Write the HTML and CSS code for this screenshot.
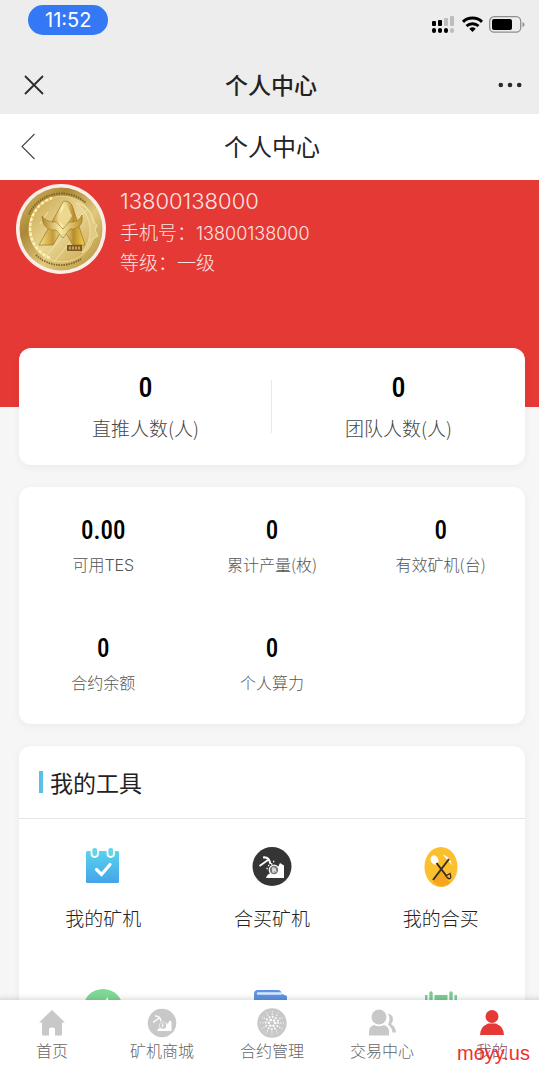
FILE: index.html
```html
<!DOCTYPE html>
<html lang="zh-CN">
<head>
<meta charset="utf-8">
<meta name="viewport" content="width=device-width, initial-scale=1">
<title>个人中心</title>
<link rel="stylesheet" href="styles.css">
</head>
<body>
<div class="app">
  <div class="chrome">
    <div class="status">
      <span class="clock">11:52</span>
      <svg class="status-icons" width="94" height="20" viewBox="0 0 94 20" aria-hidden="true">
        <g fill="#000"><rect x="0" y="6" width="4" height="5" rx="1"/><rect x="6" y="5" width="4" height="6" rx="1"/><rect x="0" y="13" width="4" height="5" rx="2"/><rect x="6" y="13" width="4" height="5" rx="2"/><rect x="12" y="13" width="4" height="5" rx="2"/></g>
        <g fill="#bdbdbd"><rect x="12" y="3" width="4" height="8" rx="1"/><rect x="18" y="1" width="4" height="10" rx="1"/><rect x="18" y="13" width="4" height="5" rx="2"/></g>
        <g fill="none" stroke="#000" stroke-width="3"><path d="M31 6.800a14 14 0 0 1 19 0"/><path d="M34.500 11a9 9 0 0 1 12 0"/></g>
        <path d="M37.300 13.700a5 5 0 0 1 6.400 0L40.500 17z"/>
        <rect x="57.700" y="1.700" width="31" height="15.500" rx="4.500" fill="none" stroke="#8f8f8f" stroke-width="1.300"/>
        <rect x="60" y="4" width="20" height="11" rx="2"/>
        <path d="M90.500 7v5q2-.5 2-2.500t-2-2.500" fill="#8f8f8f"/>
      </svg>
    </div>
    <div class="titlebar">
      <button class="icon-button" aria-label="关闭"><svg width="20" height="20" viewBox="0 0 20 20"><path d="M1 1 19 19M19 1 1 19" stroke="#2b2b2b" stroke-width="1.800" fill="none"/></svg></button>
      <h1 class="app-title">个人中心</h1>
      <button class="icon-button end" aria-label="更多"><svg width="24" height="6" viewBox="0 0 24 6" fill="#2b2b2b"><circle cx="2.800" cy="3" r="2.300"/><circle cx="12" cy="3" r="2.300"/><circle cx="21.200" cy="3" r="2.300"/></svg></button>
    </div>
  </div>
  <header class="page-head">
    <button class="icon-button" aria-label="返回"><svg width="16" height="28" viewBox="0 0 16 28"><path d="M14.500 1 2 13.500 14.500 26" stroke="#444" stroke-width="1.100" fill="none"/></svg></button>
    <h2 class="page-title">个人中心</h2>
  </header>

  <main class="content">
    <section class="profile">
      <svg class="avatar" viewBox="0 0 90 90" aria-hidden="true">
        <defs>
          <linearGradient id="rim" x1="0" y1="0" x2="1" y2="1"><stop offset="0" stop-color="#d9bd6c"/><stop offset=".3" stop-color="#ab8838"/><stop offset=".6" stop-color="#e0c87c"/><stop offset="1" stop-color="#b08c38"/></linearGradient>
          <linearGradient id="face" x1="0" y1="0" x2="1" y2="1"><stop offset="0" stop-color="#c8a348"/><stop offset=".5" stop-color="#e9d796"/><stop offset="1" stop-color="#c9a44c"/></linearGradient>
          <linearGradient id="mark" x1="0" y1="0" x2="1" y2="0"><stop offset="0" stop-color="#f7e58e"/><stop offset=".3" stop-color="#c59a35"/><stop offset=".5" stop-color="#fff3b4"/><stop offset=".75" stop-color="#b98c2c"/><stop offset="1" stop-color="#f3d54f"/></linearGradient>
          <linearGradient id="horn" x1="0" y1="0" x2="1" y2="0"><stop offset="0" stop-color="#b08428"/><stop offset=".45" stop-color="#f7e9a6"/><stop offset="1" stop-color="#c0922d"/></linearGradient>
        </defs>
        <circle cx="45" cy="45" r="45" fill="#fbeee8"/>
        <circle cx="45" cy="45" r="41.500" fill="url(#rim)"/>
        <path d="M13 30A36 36 0 0 1 70 19M20 71a36 36 0 0 0 45 4" fill="none" stroke="#7f6222" stroke-width="1.800" stroke-dasharray="1.500 1"/>
        <circle cx="46" cy="45" r="33" fill="url(#face)" stroke="#f0e0a0" stroke-width=".8"/>
        <path d="M34 74A32 32 0 0 1 36 14" fill="none" stroke="#fff2b0" stroke-width="2.400" stroke-dasharray="3.500 1.500"/>
        <path d="M60 19q16 4 17 19l4 3-2 5 3 6-7 4q-2 9-9 13 9-12 8-25-1-15-14-25" fill="#e2cb84" stroke="#f5e8b4" stroke-width=".7"/>
        <path d="M27 76 45 54M38 78 54 58M62 34l10-9M24 40l8-12" stroke="#f6e9b2" stroke-width=".8"/>
        <path d="M49 17q-2 0-3 3L23 61h14l10-17 10 17h12L57 24q-1-4-4-6z" fill="url(#mark)" stroke="#97742a" stroke-width=".7"/>
        <path d="M26 32q0 11 9 14h5l7 8 7-9h4q10-3 8-14-3 7-10 7h-3l-6 7-7-7h-4q-7-1-10-6z" fill="url(#horn)" stroke="#97742a" stroke-width=".6"/>
        <path d="m50 19-8 16 6 8 8-11z" fill="#ecd98f"/>
        <rect x="51" y="61" width="15" height="6" fill="#7e5924"/>
        <path d="M53 64h11" stroke="#c4a05d" stroke-width="3" stroke-dasharray="2 1"/>
      </svg>
      <div class="profile-text">
        <p class="profile-name">13800138000</p>
        <p class="profile-row">手机号：<span class="digits">13800138000</span></p>
        <p class="profile-row">等级：一级</p>
      </div>
    </section>

    <div class="cards">
      <dl class="card team">
        <div class="team-item"><dt>直推人数(人)</dt><dd>0</dd></div>
        <div class="team-item"><dt>团队人数(人)</dt><dd>0</dd></div>
      </dl>

      <dl class="card stats">
        <div class="stat"><dt>可用<span class="latin">TES</span></dt><dd>0.00</dd></div>
        <div class="stat"><dt>累计产量(枚)</dt><dd>0</dd></div>
        <div class="stat"><dt>有效矿机(台)</dt><dd>0</dd></div>
        <div class="stat"><dt>合约余额</dt><dd>0</dd></div>
        <div class="stat"><dt>个人算力</dt><dd>0</dd></div>
      </dl>

      <section class="card tools">
        <h3 class="tools-title">我的工具</h3>
        <div class="tool-grid">
          <a class="tool" href="#miners">
            <svg width="40" height="40" viewBox="0 0 40 40" aria-hidden="true">
              <defs><linearGradient id="sky" x1="0" y1="0" x2="0" y2="1"><stop offset="0" stop-color="#57d3ee"/><stop offset="1" stop-color="#45a4e8"/></linearGradient></defs>
              <rect x="3" y="4" width="33" height="32" rx="1.500" fill="url(#sky)"/>
              <g fill="#62d5e8" stroke="#fff" stroke-width="1.800"><rect x="8.500" y="0" width="6.500" height="10" rx="3.200"/><rect x="24.500" y="0" width="6.500" height="10" rx="3.200"/></g>
              <path d="m13.500 22.500 5 5 8.500-10" fill="none" stroke="#fff" stroke-width="3.200" stroke-linecap="round"/>
            </svg>
            <span>我的矿机</span>
          </a>
          <a class="tool" href="#group-miners">
            <svg width="40" height="40" viewBox="0 0 40 40" aria-hidden="true">
              <circle cx="20" cy="19.500" r="19.500" fill="#353535"/>
              <g fill="none" stroke="#fff"><path d="M11 10.500q6-1 7.500 6.500" stroke-width="2"/><path d="m16 13-8.500 6" stroke-width="1.800"/></g>
              <path d="M14 31q1-4 5-5l7-6 2-4 4 2.500V31z" fill="#fff"/>
              <circle cx="22" cy="23" r="4.800" fill="#777" stroke="#fff" stroke-width="1.200"/>
              <path d="M20.800 20.500v5M20.800 21h2q1.500 1 0 2h-2 2.500q1.500 1.500 0 2h-2.500" stroke="#fff" fill="none" stroke-width=".9"/>
              <path d="M16 18.500h1.300M14.500 21.500h1.300M21 14.500h1.300M19 17h1.300" stroke="#fff" stroke-width="1.300"/>
            </svg>
            <span>合买矿机</span>
          </a>
          <a class="tool" href="#group">
            <svg width="40" height="40" viewBox="0 0 40 40" aria-hidden="true">
              <ellipse cx="20" cy="20" rx="16.500" ry="20" fill="#fbc02d"/>
              <path d="M12 35 20 24l9 12q-8 7-17-1" fill="#f6a51f"/>
              <ellipse cx="13.500" cy="13" rx="3.800" ry="4.800" fill="#fff" transform="rotate(-25 13.500 13)"/>
              <path d="M21.500 7.500q8 2 9.500 11-3-5-6-7z" fill="#fff"/>
              <g fill="none" stroke="#3b2c1d" stroke-width="2"><path d="m15.500 16 10 13M28 12 12 33"/><path d="m25 29 4-2.500q1.500 4 0 5t-4-2.500z" stroke-width="1.300"/></g>
            </svg>
            <span>我的合买</span>
          </a>
          <div class="tool">
            <svg width="40" height="40" viewBox="0 0 40 40" aria-hidden="true"><circle cx="20" cy="20" r="20" fill="#7fd896"/><path d="m14 20 11-12 1 12z" fill="#fff"/></svg>
          </div>
          <div class="tool">
            <svg width="40" height="40" viewBox="0 0 40 40" aria-hidden="true"><path d="M2 5q0-4 4-4h20q3 0 4 4l5 2v30H2z" fill="#5f92e4"/><path d="M6 4.500h23" stroke="#d7eaff" stroke-width="2.400" stroke-linecap="round"/></svg>
          </div>
          <div class="tool">
            <svg width="40" height="40" viewBox="0 0 40 40" aria-hidden="true"><path d="M4 6h32v30H4z" fill="#7bce93"/><path d="M10 2v12M30 2v12" stroke="#fff" stroke-width="7"/><path d="M10 4v9M30 4v9" stroke="#7bce93" stroke-width="3.400" stroke-linecap="round"/></svg>
          </div>
        </div>
      </section>
    </div>
  </main>

  <nav class="tabbar">
    <a class="tab" href="#home">
      <svg width="30" height="30" viewBox="0 0 30 30" fill="#c8c8c8" aria-hidden="true"><path d="M15 2 2 14.500h3V26q0 1.500 1.500 1.500H12v-7q3-2 6 0v7h5.500q1.500 0 1.500-1.500V14.500h3z"/></svg>
      <span>首页</span>
    </a>
    <a class="tab" href="#mall">
      <svg width="30" height="30" viewBox="0 0 30 30" aria-hidden="true">
        <circle cx="15" cy="15" r="14.300" fill="#c8c8c8"/>
        <g fill="none" stroke="#fff"><path d="M8 8q5-.5 6 5" stroke-width="1.500"/><path d="m12 10-6 4.500" stroke-width="1.400"/></g>
        <path d="M10 23q1-3 3-3.500l6-4 2 0 1.500-3 2 1v9.500z" fill="#fff"/>
        <circle cx="16" cy="17.500" r="3.500" fill="#c8c8c8" stroke="#fff" stroke-dasharray="1.500 .7"/><path d="M15.500 15.500v4M15.500 17.500h1.500" stroke="#fff" stroke-width=".8"/>
      </svg>
      <span>矿机商城</span>
    </a>
    <a class="tab" href="#contracts">
      <svg width="30" height="30" viewBox="0 0 30 30" fill="none" stroke="#fff" stroke-linecap="round" aria-hidden="true">
        <circle cx="15" cy="15" r="14.700" fill="#c8c8c8" stroke="none"/>
        <circle cx="15" cy="15" r="3.200" stroke-width="2.500" stroke-dasharray="0 3.351"/>
        <circle cx="15" cy="15" r="6.200" stroke-width="2" stroke-dasharray="0 3.246"/>
        <circle cx="15" cy="15" r="9" stroke-width="1.400" stroke-dasharray="0 4.712"/>
        <circle cx="15" cy="15" r="11.500" stroke-width="1" stroke-dasharray="0 6.021"/>
      </svg>
      <span>合约管理</span>
    </a>
    <a class="tab" href="#trade">
      <svg width="30" height="30" viewBox="0 0 30 30" fill="#c8c8c8" aria-hidden="true"><circle cx="12" cy="9" r="7.500"/><path d="M2 27.500v-4q0-5 5-6.500 5 2.500 10 0 5 1.500 5 6.500v4z"/><path d="M21 5.500q5 1.500 5 5.500 0 3-2 5 5 3 5 8.500h-3.500q-.5-5-4.500-8 3-5.500 0-11z"/></svg>
      <span>交易中心</span>
    </a>
    <a class="tab active" href="#me" aria-current="page">
      <svg width="30" height="30" viewBox="0 0 30 30" fill="#e53935" aria-hidden="true"><circle cx="15" cy="8.500" r="6.500"/><path d="M3 27q0-8 8-11.500h8q8 3.500 8 11.500z"/></svg>
      <span>我的</span>
    </a>
  </nav>
  <div class="site-mark">moyy.us</div>
</div>
</body>
</html>
```
FILE: styles.css
```css
* { box-sizing: border-box; }

body, h1, h2, h3, p, dl, dd { margin: 0; }

body {
  font-family: "Noto Sans CJK SC", sans-serif;
  font-weight: 300;
  color: #222;
  background: #f6f6f6;
}

a { color: inherit; text-decoration: none; }
svg { display: block; flex: none; }

.app {
  position: relative;
  display: flex;
  flex-direction: column;
  height: 100vh;
  overflow: hidden;
}

.icon-button {
  display: flex;
  padding: 0;
  border: 0;
  background: none;
}

/* System status and window title */
.chrome { background: #ededed; }

.status {
  display: flex;
  justify-content: space-between;
  align-items: flex-start;
  padding: 5px 13px 0 28px;
  height: 56px;
}

.clock {
  padding: 0 17px;
  border-radius: 15px;
  background: #3478f6;
  color: #fff;
  font: 400 20px/30px Inter, sans-serif;
}

.status-icons { margin-top: 10px; }

.titlebar, .page-head {
  display: grid;
  grid-template-columns: 60px 1fr 60px;
  align-items: center;
  text-align: center;
}

.titlebar { height: 58px; padding: 0 17px 0 24px; }
.end { justify-self: end; }
.app-title { padding: 0 4px 2px 0; font-size: 23px; line-height: 32px; font-weight: 500; }

.page-head { height: 66px; padding: 0 15px 0 20px; background: #fff; }
.page-title { padding-bottom: 2px; font-size: 24px; line-height: 32px; font-weight: 400; }

.content {
  flex: 1;
  min-height: 0;
  overflow: hidden auto;
  scrollbar-width: none;
}

.profile {
  display: flex;
  align-items: flex-start;
  gap: 14px;
  min-height: 227px;
  padding: 4px 16px;
  background: #e53935;
  color: #fbe4e1;
}

.avatar { width: 90px; height: 90px; }
.profile-text { padding-top: 1px; }
.profile-name { font: 300 22px/32px Inter, sans-serif; }
.profile-row { font-size: 19px; line-height: 30px; }
.digits { font-family: Inter, sans-serif; font-size: 18px; line-height: 1; }

/* Cards */
.cards {
  display: grid;
  gap: 22px;
  margin-top: -59px;
  padding: 0 14px 22px 19px;
}

.card {
  border-radius: 12px;
  background: #fff;
  box-shadow: 0 2px 8px rgba(0, 0, 0, 0.05);
}

dd {
  color: #000;
  font-family: "Roboto Condensed", "Liberation Sans Narrow", "Roboto", sans-serif;
  font-weight: 500;
}

.team { display: grid; grid-template-columns: 1fr 1fr; padding: 24px 0 22px; }

.team-item, .stat {
  display: flex;
  flex-direction: column-reverse;
  align-items: center;
}

.team-item { position: relative; gap: 9px; }
.team-item dt { color: #444; font-size: 19px; line-height: 30px; }
.team-item dd { font-size: 28px; line-height: 32px; }

.team-item + .team-item::before {
  content: "";
  position: absolute;
  left: -1px;
  top: 8px;
  bottom: 10px;
  width: 1px;
  background: #e8e8e8;
}

.stats {
  display: grid;
  grid-template-columns: repeat(3, 1fr);
  row-gap: 56px;
  padding: 28px 0 29px;
}

.stat { gap: 4px; }
.stat dt { color: #555; font-size: 16px; line-height: 26px; }
.stat dd { font-size: 25px; line-height: 32px; }
.latin { font-family: Inter, sans-serif; line-height: 1; }

.tools-title {
  display: flex;
  align-items: center;
  gap: 7px;
  padding: 20px;
  border-bottom: 1px solid #e6e6e6;
  font-size: 23px;
  line-height: 32px;
  font-weight: 400;
}

.tools-title::before {
  content: "";
  width: 4px;
  height: 22px;
  background: #5bc0e8;
}

.tool-grid { display: grid; grid-template-columns: repeat(3, 1fr); }

.tool {
  display: flex;
  flex-direction: column;
  align-items: center;
  gap: 17px;
  padding: 28px 0 29px;
  font-size: 19px;
  line-height: 28px;
}

/* Bottom navigation */
.tabbar {
  position: relative;
  display: grid;
  grid-template-columns: repeat(5, 1fr);
  margin: 0 -8px 0 -3px;
  padding: 8px 0 6px;
  background: #fff;
  box-shadow: 0 -1px 6px rgba(0, 0, 0, 0.16);
}

.tab {
  display: flex;
  flex-direction: column;
  align-items: center;
  color: #666;
  font-size: 16px;
  line-height: 24px;
}

.active { color: #8c4a4c; }

.site-mark {
  position: absolute;
  right: 9px;
  bottom: 3px;
  color: #f0302c;
  font: 400 20px/24px "Liberation Sans", sans-serif;
}
```
